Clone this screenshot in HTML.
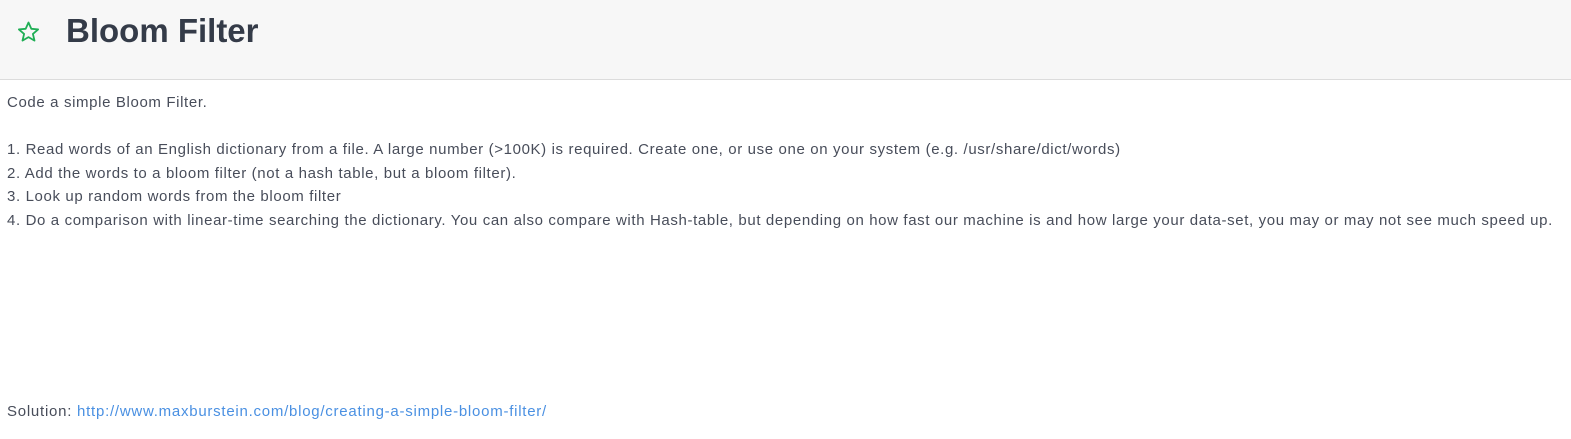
<!DOCTYPE html>
<html><head><meta charset="utf-8"><style>
body{margin:0;background:#fff;font-family:"Liberation Sans",sans-serif;color:#3d4250;width:1571px;height:439px;overflow:hidden}
.hdr{height:79px;background:#f7f7f7;border-bottom:1px solid #dcdcdc;position:relative}
.hdr h1{position:absolute;left:66px;top:11px;margin:0;font-size:33px;font-weight:bold;color:#343b48;line-height:40px}
.hdr svg{position:absolute;left:16px;top:20px}
.c{position:absolute;left:7px;top:91px;font-size:15px;line-height:23.5px;color:#484d5a;letter-spacing:0.63px;white-space:nowrap}
.sol{position:absolute;left:7px;top:403px;font-size:15px;color:#484d5a;letter-spacing:0.75px;white-space:nowrap}
a{color:#4a90e2;text-decoration:none}
</style></head><body>
<div class="hdr"><svg width="25" height="24" viewBox="0 0 24 24"><path d="M12 2.5l2.8 6.3 6.8.6-5.2 4.5 1.6 6.7L12 17.1l-6 3.5 1.6-6.7L2.4 9.4l6.8-.6z" fill="none" stroke="#1fae55" stroke-width="1.8" stroke-linejoin="round"/></svg><h1>Bloom Filter</h1></div>
<div class="c">Code a simple Bloom Filter.<br><br>
1. Read words of an English dictionary from a file. A large number (&gt;100K) is required. Create one, or use one on your system (e.g. /usr/share/dict/words)<br>
2. Add the words to a bloom filter (not a hash table, but a bloom filter).<br>
3. Look up random words from the bloom filter<br>
4. Do a comparison with linear-time searching the dictionary. You can also compare with Hash-table, but depending on how fast our machine is and how large your data-set, you may or may not see much speed up.</div>
<div class="sol">Solution: <a>http://www.maxburstein.com/blog/creating-a-simple-bloom-filter/</a></div>
</body></html>
